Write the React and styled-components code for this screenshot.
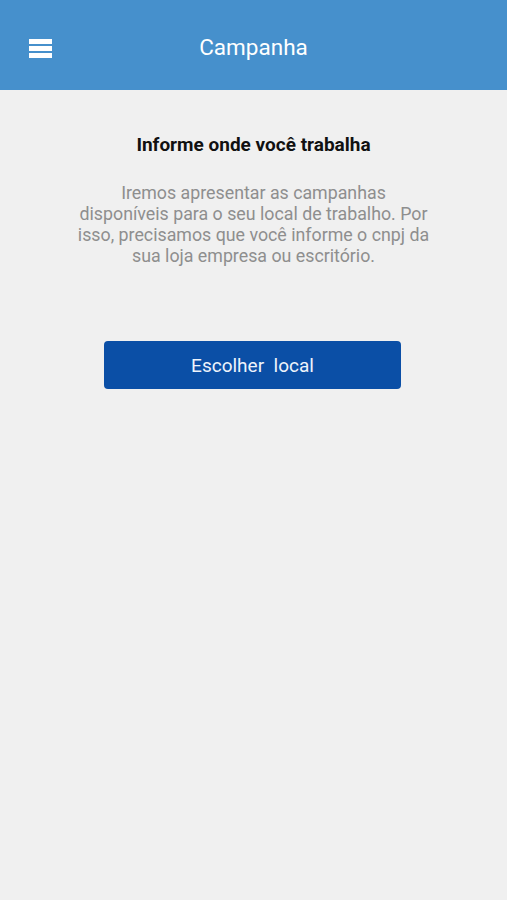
import React from "react";
import styled, { createGlobalStyle } from "styled-components";

const GlobalStyle = createGlobalStyle`
  html, body {
    margin: 0;
    padding: 0;
    background: #f0f0f0;
    font-family: Roboto, "Liberation Sans", Arial, sans-serif;
  }
`;

const Page = styled.div`
  width: 507px;
  min-height: 900px;
  background: #f0f0f0;
  display: flex;
  flex-direction: column;
`;

const Header = styled.header`
  position: relative;
  height: 90px;
  background: #4690cc;
  display: flex;
  align-items: center;
  justify-content: center;
  flex-shrink: 0;
`;

const MenuButton = styled.button`
  position: absolute;
  left: 29px;
  top: 39px;
  width: 23px;
  height: 19px;
  padding: 0;
  border: 0;
  background: transparent;
  display: flex;
  flex-direction: column;
  justify-content: space-between;
  cursor: pointer;

  span {
    display: block;
    height: 5px;
    background: #fff;
  }
`;

const Title = styled.h1`
  margin: 0 0 -4px;
  font-size: 22.5px;
  line-height: 28px;
  font-weight: 400;
  color: #fff;
`;

const Content = styled.main`
  display: flex;
  flex-direction: column;
  align-items: center;
  padding-top: 43px;
`;

const Heading = styled.h2`
  margin: 0;
  font-size: 19px;
  font-weight: 700;
  color: #111;
  line-height: 24px;
`;

const Description = styled.p`
  margin: 25px 0 0;
  text-align: center;
  font-size: 17.8px;
  line-height: 21px;
  color: #8e8e8e;
`;

const PrimaryButton = styled.button`
  margin-top: 75px;
  margin-right: 2px;
  width: 297px;
  height: 48px;
  border: 0;
  border-radius: 4px;
  background: #0b4fa6;
  color: #eef3fb;
  font-family: inherit;
  font-size: 19px;
  white-space: pre;
  cursor: pointer;
`;

export default function App() {
  return (
    <Page>
      <GlobalStyle />
      <Header>
        <MenuButton aria-label="menu">
          <span />
          <span />
          <span />
        </MenuButton>
        <Title>Campanha</Title>
      </Header>
      <Content>
        <Heading>Informe onde você trabalha</Heading>
        <Description>
          Iremos apresentar as campanhas
          <br />
          disponíveis para o seu local de trabalho. Por
          <br />
          isso, precisamos que você informe o cnpj da
          <br />
          sua loja empresa ou escritório.
        </Description>
        <PrimaryButton>{"Escolher  local"}</PrimaryButton>
      </Content>
    </Page>
  );
}
